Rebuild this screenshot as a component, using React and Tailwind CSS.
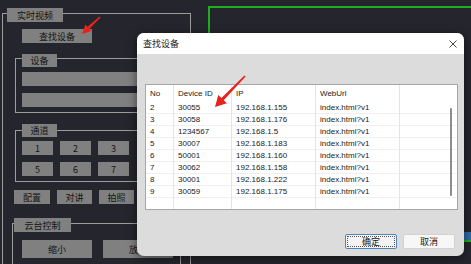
const rows = [
  ['2', '30055', '192.168.1.155'],
  ['3', '30058', '192.168.1.176'],
  ['4', '1234567', '192.168.1.5'],
  ['5', '30007', '192.168.1.183'],
  ['6', '50001', '192.168.1.160'],
  ['7', '30062', '192.168.1.158'],
  ['8', '30001', '192.168.1.222'],
  ['9', '30059', '192.168.1.175'],
];

const gray = 'bg-[#808080] text-[#141414] text-[9px] leading-none flex items-center justify-center';

function Column({ width, title, values, last }) {
  return (
    <div className={`${width} h-full flex flex-col ${last ? '' : 'border-r border-[#e4e4e4]'}`}>
      <div className="h-[17px] pl-[4px] flex items-center">{title}</div>
      {values.map((v, i) => (
        <div key={i} className="h-[12px] pl-[4px] flex items-center border-b border-[#f0f0f0]">
          {v}
        </div>
      ))}
    </div>
  );
}

function LeftPanel() {
  return (
    <div className="ml-[2px] mt-[13px] w-[189px] h-[260px] border-l border-t border-r border-[#9c9c9c] shrink-0">
      <div className={`${gray} -mt-[6px] ml-[4px] w-[56px] h-[14px]`}>实时视频</div>
      <div className={`${gray} mt-[7px] ml-[19px] w-[70px] h-[14px]`}>查找设备</div>

      <div className="mt-[15px] ml-[12px] w-[166px] border border-[#9c9c9c] pb-[5px]">
        <div className={`${gray} -mt-[5px] ml-[6px] w-[35px] h-[13px]`}>设备</div>
        <div className="mt-[5px] ml-[6px] w-[156px] h-[14px] bg-[#808080]" />
        <div className="mt-[7px] ml-[6px] w-[156px] h-[14px] bg-[#808080]" />
      </div>

      <div className="mt-[17px] ml-[12px] w-[166px] border border-[#9c9c9c] pb-[5px]">
        <div className={`${gray} -mt-[7px] ml-[6px] w-[35px] h-[13px]`}>通道</div>
        <div className="mt-[4px] ml-[6px] flex gap-[7px]">
          {['1', '2', '3'].map((n) => (
            <div key={n} className={`${gray} w-[31px] h-[14px] text-[8px]`}>{n}</div>
          ))}
        </div>
        <div className="mt-[7px] ml-[6px] flex gap-[7px]">
          {['5', '6', '7'].map((n) => (
            <div key={n} className={`${gray} w-[31px] h-[14px] text-[8px]`}>{n}</div>
          ))}
        </div>
      </div>

      <div className="mt-[8px] ml-[11px] flex gap-[7px]">
        <div className={`${gray} w-[36px] h-[14px]`}>配置</div>
        <div className={`${gray} w-[35px] h-[14px]`}>对讲</div>
        <div className={`${gray} w-[35px] h-[14px]`}>拍照</div>
      </div>

      <div className="mt-[19px] ml-[9px] w-[169px] h-[60px] border-l border-t border-r border-[#9c9c9c]">
        <div className={`${gray} -mt-[6px] ml-[1px] w-[57px] h-[14px]`}>云台控制</div>
        <div className="mt-[8px] ml-[9px] flex gap-[11px]">
          <div className={`${gray} w-[70px] h-[18px]`}>缩小</div>
          <div className={`${gray} w-[70px] h-[18px]`}>放大</div>
        </div>
      </div>
    </div>
  );
}

export default function App() {
  return (
    <div className="relative w-[471px] h-[264px] overflow-hidden bg-[#25252d] flex font-['Noto_Sans_CJK_SC',sans-serif]">
      <LeftPanel />
      <div className="ml-[17px] mt-[6px] h-[236px] flex-1 border-l-2 border-t-2 border-b-2 border-[#1fae1f] flex flex-col justify-end">
        <div className="ml-auto w-[60px] h-[8px] bg-[#2d6aa6]" />
      </div>

      {/* dialog */}
      <div className="absolute left-[137px] top-[33px] w-[327px] h-[223px] rounded-[7px] overflow-hidden bg-[#dcdcdc] shadow-[0_2px_10px_rgba(0,0,0,0.55)] flex flex-col">
        <div className="h-[21px] bg-white flex items-center justify-between pl-[6px] pr-[7px]">
          <span className="text-[9px] text-[#222]">查找设备</span>
          <svg width="8" height="8" viewBox="0 0 8 8">
            <path d="M0.5 0.5 L7.5 7.5 M7.5 0.5 L0.5 7.5" stroke="#333" strokeWidth="0.9" />
          </svg>
        </div>
        <div className="flex-1 flex flex-col px-[8px]">
          <div className="relative mt-[30px] h-[126px] w-[313px] bg-white border border-[#a6a6a6] flex font-['Liberation_Sans',sans-serif] text-[8px] text-[#1a1a1a] leading-none">
            <Column width="w-[28px]" title="No" values={rows.map((r) => r[0])} />
            <Column width="w-[58px]" title="Device ID" values={rows.map((r) => r[1])} />
            <Column width="w-[84px]" title="IP" values={rows.map((r) => r[2])} />
            <Column width="w-[84px]" title="WebUrl" values={rows.map(() => 'index.html?v1')} />
            <Column width="flex-1" title="" values={rows.map(() => '')} last />
            <div className="absolute right-[5px] top-[23px] w-[2px] h-[88px] rounded-full bg-[#8c8c8c]" />
          </div>
          <div className="mt-[24px] flex justify-end gap-[6px] pr-[1px]">
            <div className="w-[52px] h-[15px] border border-[#4f86c0] rounded-[2px] bg-[#f3f3f3] p-[1px]">
              <div className="w-full h-full border border-dotted border-[#555] flex items-center justify-center text-[9px] text-[#1a1a1a] leading-none">
                确定
              </div>
            </div>
            <div className="w-[52px] h-[15px] border border-[#d2d2d2] rounded-[2px] bg-[#f7f7f7] flex items-center justify-center text-[9px] text-[#1a1a1a] leading-none">
              取消
            </div>
          </div>
        </div>
      </div>

      {/* annotation arrows */}
      <svg className="absolute left-0 top-0 pointer-events-none" width="471" height="264" viewBox="0 0 471 264">
        <polygon
          fill="#e8231b"
          points="99.5,16.4 87.5,26.8 85.4,24.5 82,34 91.6,31.1 89.5,28.8 100.5,17.6"
        />
        <polygon
          fill="#e8231b"
          points="244.4,75.4 221.45,98 218.3,94.9 215,107 226.9,103.3 223.75,100.2 245.6,76.6"
        />
      </svg>
    </div>
  );
}
